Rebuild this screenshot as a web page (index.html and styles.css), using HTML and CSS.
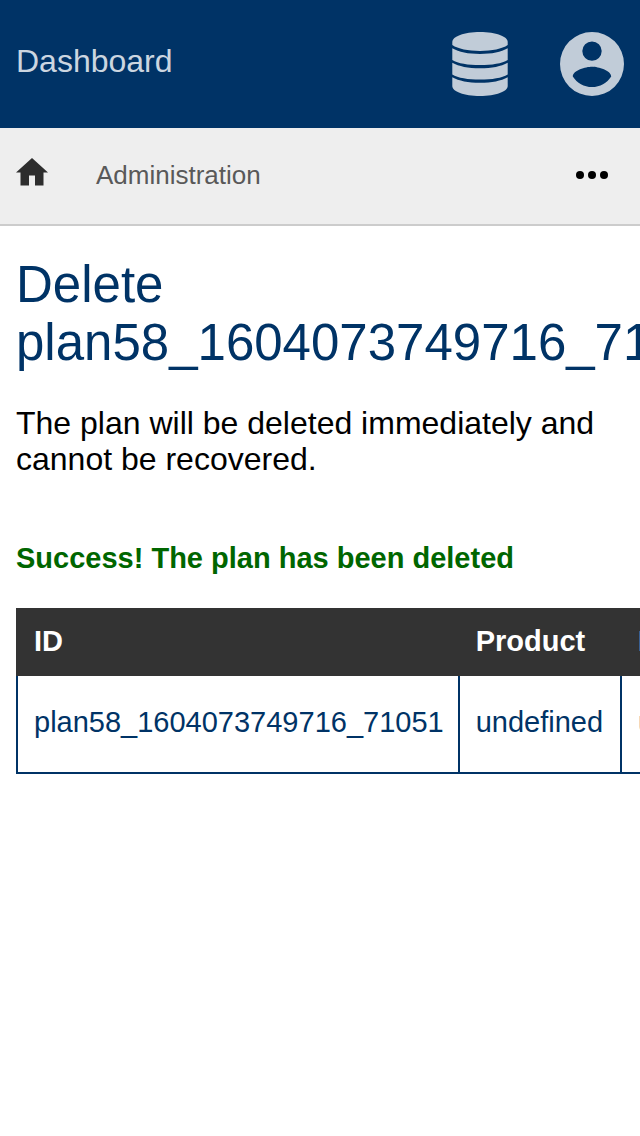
FILE: index.html
```html
<!DOCTYPE html>
<html lang="en">
<head>
<meta charset="utf-8">
<meta name="viewport" content="width=device-width, initial-scale=1">
<title>Dashboard</title>
<link rel="stylesheet" href="styles.css">
</head>
<body>
<header class="topbar">
  <a class="brand" href="#">Dashboard</a>
  <nav class="tools" aria-label="Account">
    <a class="tool" href="#" aria-label="Database">
      <svg class="tool-icon" viewBox="0 0 64 64" aria-hidden="true">
        <path d="M4.300 10C4.300 4.500 16 0 32 0s27.700 4.500 27.700 10v3C54 17 44 18.900 32 18.900S10 17 4.300 13z"/>
        <path d="M4.300 16.300C11 20 20 22 32 22s21-2 27.700-5.700V28C54 31.500 44 33.100 32 33.100S10 31.500 4.300 28z"/>
        <path d="M4.300 30.800C11 34.500 20 36.300 32 36.300s21-1.800 27.700-5.500v11.600C54 45.900 44 47.500 32 47.500S10 45.900 4.300 42.400z"/>
        <path d="M4.300 45.200C11 48.900 20 50.700 32 50.700s21-1.800 27.700-5.500V54C59.700 59.500 48 64 32 64S4.300 59.500 4.300 54z"/>
      </svg>
    </a>
    <a class="tool" href="#" aria-label="Profile">
      <svg class="tool-icon" viewBox="0 0 64 64" aria-hidden="true">
        <path fill-rule="evenodd" d="M32 0a32 32 0 1 0 0 64a32 32 0 1 0 0-64zM32 9.400a9.700 9.700 0 1 1 0 19.400a9.700 9.700 0 1 1 0-19.400zM32 55c-8 0-15-4-19.200-10.600C13 38.300 25.600 34.800 32 34.800s19 3.500 19.200 9.600C47 51 40 55 32 55z"/>
      </svg>
    </a>
  </nav>
</header>
<nav class="crumbs" aria-label="Breadcrumb">
  <a class="home" href="#" aria-label="Home">
    <svg class="home-icon" viewBox="0 0 32 28" aria-hidden="true"><path d="M13 27.500V17.500h6v10h8.500V14.500H32L16 0L0 14.500h4.500v13z"/></svg>
  </a>
  <a class="crumb" href="#">Administration</a>
  <button class="more" type="button" aria-label="More">
    <svg class="more-icon" viewBox="0 0 32 8" aria-hidden="true"><circle cx="4" cy="4" r="4"/><circle cx="16" cy="4" r="4"/><circle cx="28" cy="4" r="4"/></svg>
  </button>
</nav>
<main class="content">
  <h1 class="title">Delete plan58_1604073749716_71051</h1>
  <p class="lead">The plan will be deleted immediately and cannot be recovered.</p>
  <h2 class="success">Success! The plan has been deleted</h2>
  <table class="plans">
    <thead><tr><th scope="col">ID</th><th scope="col">Product</th><th scope="col">Reference</th></tr></thead>
    <tbody><tr><td><a href="#">plan58_1604073749716_71051</a></td><td>undefined</td><td>undefined</td></tr></tbody>
  </table>
</main>
</body>
</html>
```
FILE: styles.css
```css
* { box-sizing: border-box; }
body {
  margin: 0;
  background: #fff;
  color: #000;
  font-family: "Liberation Sans", Arial, sans-serif;
  font-size: 32px;
}
a { color: inherit; text-decoration: none; }
.topbar {
  display: flex;
  align-items: center;
  justify-content: space-between;
  padding: 32px 16px;
  background: #003366;
  color: #bfccd9;
}
.brand { padding-bottom: 6px; line-height: 36px; color: #ccd6e0; }
.tools { display: flex; gap: 48px; }
.tool { display: block; }
.tool-icon { display: block; width: 64px; height: 64px; fill: #c1ccd8; }
.crumbs {
  display: flex;
  align-items: center;
  padding: 30px 32px 32px 16px;
  border-bottom: 2px solid #ccc;
  background: #eee;
}
.home { margin-right: 48px; padding-bottom: 6px; }
.home-icon { display: block; width: 32px; height: 28px; fill: #2d2d2d; }
.crumb { color: #595959; font-size: 26px; line-height: 32px; }
.more { margin-left: auto; padding: 0; border: 0; background: none; cursor: pointer; }
.more-icon { display: block; width: 32px; height: 8px; fill: #000; }
.content { padding: 30px 16px; overflow-x: clip; }
.title { margin: 0 0 33px; color: #003366; font-size: 51px; font-weight: 400; line-height: 58px; }
.lead { margin: 0 0 64px; line-height: 36px; }
.success { margin: 0 0 33px; color: #006600; font-size: 29px; line-height: 34px; }
.plans { border-collapse: collapse; color: #003366; font-size: 29px; line-height: 33px; }
.plans th {
  padding: 15px 17px 16px 16px;
  border: 2px solid #333;
  background: #333;
  color: #fff;
  text-align: left;
}
.plans td { padding: 30px 17px 33px 16px; border: 2px solid #003366; }
.plans tbody tr:first-child td { border-top-color: #333; }
.plans th:first-child, .plans td:first-child { padding-right: 14px; }
```
